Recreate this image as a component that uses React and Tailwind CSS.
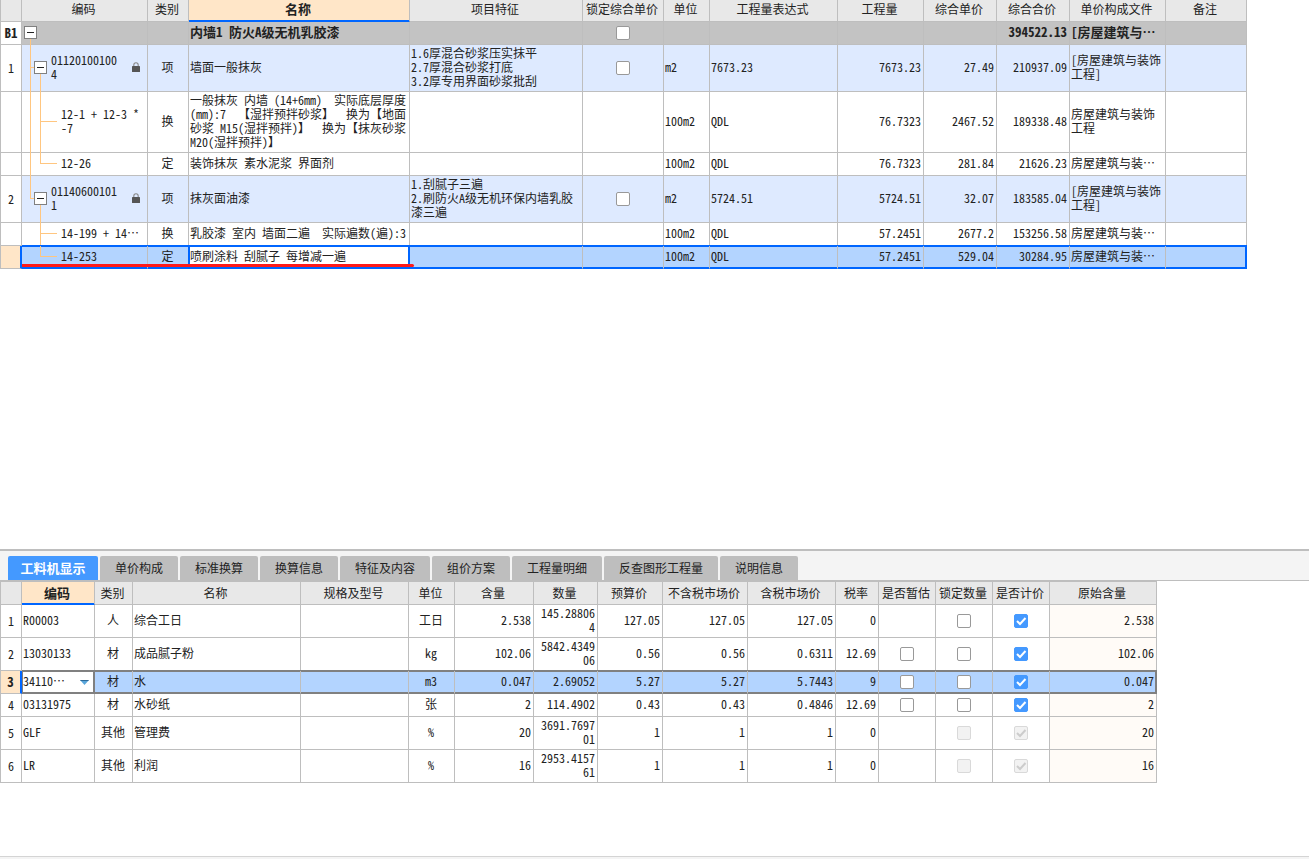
import { useState } from 'react'
import clsx from 'clsx'

const QUOTA_COLS = [
  { key: 'no', label: '', w: 'w-[22px]' },
  { key: 'code', label: '编码', w: 'w-[126px]' },
  { key: 'kind', label: '类别', w: 'w-[41px]' },
  { key: 'name', label: '名称', w: 'w-[221px]', active: true },
  { key: 'feature', label: '项目特征', w: 'w-[173px]' },
  { key: 'lock', label: '锁定综合单价', w: 'w-[81px]' },
  { key: 'unit', label: '单位', w: 'w-[46px]' },
  { key: 'expr', label: '工程量表达式', w: 'w-[128px]' },
  { key: 'qty', label: '工程量', w: 'w-[86px]' },
  { key: 'price', label: '综合单价', w: 'w-[73px]' },
  { key: 'total', label: '综合合价', w: 'w-[73px]' },
  { key: 'file', label: '单价构成文件', w: 'w-[96px]' },
  { key: 'note', label: '备注', w: 'w-[81px]' },
]

// outer / inner: how far the tree guide runs through the row
const QUOTA_ROWS = [
  { level: 0, h: 'h-[23px]', no: 'B1', name: '内墙1 防火A级无机乳胶漆', check: true, total: '394522.13', file: '[房屋建筑与…' },
  {
    level: 1, h: 'h-[47px]', outer: 'full', no: '1', code: '01120100100\n4', kind: '项', name: '墙面一般抹灰',
    feature: '1.6厚混合砂浆压实抹平\n2.7厚混合砂浆打底\n3.2厚专用界面砂浆批刮', check: true,
    unit: 'm2', expr: '7673.23', qty: '7673.23', price: '27.49', total: '210937.09', file: '[房屋建筑与装饰\n工程]',
  },
  {
    level: 2, h: 'h-[61px]', outer: 'full', inner: 'full', code: '12-1 + 12-3 *\n-7', kind: '换',
    name: '一般抹灰 内墙 (14+6mm)  实际底层厚度\n(mm):7  【湿拌预拌砂浆】  换为【地面\n砂浆 M15(湿拌预拌)】  换为【抹灰砂浆\nM20(湿拌预拌)】',
    unit: '100m2', expr: 'QDL', qty: '76.7323', price: '2467.52', total: '189338.48', file: '房屋建筑与装饰\n工程',
  },
  {
    level: 2, h: 'h-[23px]', outer: 'full', inner: 'half', code: '12-26', kind: '定', name: '装饰抹灰 素水泥浆 界面剂',
    unit: '100m2', expr: 'QDL', qty: '76.7323', price: '281.84', total: '21626.23', file: '房屋建筑与装…',
  },
  {
    level: 1, h: 'h-[47px]', outer: 'half', no: '2', code: '01140600101\n1', kind: '项', name: '抹灰面油漆',
    feature: '1.刮腻子三遍\n2.刷防火A级无机环保内墙乳胶\n漆三遍', check: true,
    unit: 'm2', expr: '5724.51', qty: '5724.51', price: '32.07', total: '183585.04', file: '[房屋建筑与装饰\n工程]',
  },
  {
    level: 2, h: 'h-[23px]', inner: 'full', code: '14-199 + 14…', kind: '换', name: '乳胶漆 室内 墙面二遍  实际遍数(遍):3',
    unit: '100m2', expr: 'QDL', qty: '57.2451', price: '2677.2', total: '153256.58', file: '房屋建筑与装…',
  },
  {
    level: 2, h: 'h-[23px]', inner: 'half', selected: true, code: '14-253', kind: '定', name: '喷刷涂料 刮腻子 每增减一遍',
    unit: '100m2', expr: 'QDL', qty: '57.2451', price: '529.04', total: '30284.95', file: '房屋建筑与装…',
  },
]

const TABS = ['工料机显示', '单价构成', '标准换算', '换算信息', '特征及内容', '组价方案', '工程量明细', '反查图形工程量', '说明信息']

const RES_COLS = [
  { key: 'no', label: '', w: 'w-[22px]' },
  { key: 'code', label: '编码', w: 'w-[73px]', active: true },
  { key: 'kind', label: '类别', w: 'w-[38px]' },
  { key: 'name', label: '名称', w: 'w-[168px]' },
  { key: 'spec', label: '规格及型号', w: 'w-[108px]' },
  { key: 'unit', label: '单位', w: 'w-[46px]' },
  { key: 'content', label: '含量', w: 'w-[79px]' },
  { key: 'qty', label: '数量', w: 'w-[64px]' },
  { key: 'budget', label: '预算价', w: 'w-[65px]' },
  { key: 'net', label: '不含税市场价', w: 'w-[85px]' },
  { key: 'gross', label: '含税市场价', w: 'w-[88px]' },
  { key: 'tax', label: '税率', w: 'w-[43px]' },
  { key: 'estimated', label: '是否暂估', w: 'w-[57px]' },
  { key: 'locked', label: '锁定数量', w: 'w-[57px]' },
  { key: 'priced', label: '是否计价', w: 'w-[57px]' },
  { key: 'origin', label: '原始含量', w: 'w-[107px]' },
]

const RES_ROWS = [
  { h: 'h-[33px]', code: 'R00003', kind: '人', name: '综合工日', unit: '工日', content: '2.538', qty: '145.28806\n4', budget: '127.05', net: '127.05', gross: '127.05', tax: '0' },
  { h: 'h-[33px]', code: '13030133', kind: '材', name: '成品腻子粉', unit: 'kg', content: '102.06', qty: '5842.4349\n06', budget: '0.56', net: '0.56', gross: '0.6311', tax: '12.69', estimate: true },
  { h: 'h-[23px]', code: '34110…', kind: '材', name: '水', unit: 'm3', content: '0.047', qty: '2.69052', budget: '5.27', net: '5.27', gross: '5.7443', tax: '9', estimate: true, selected: true },
  { h: 'h-[23px]', code: '03131975', kind: '材', name: '水砂纸', unit: '张', content: '2', qty: '114.4902', budget: '0.43', net: '0.43', gross: '0.4846', tax: '12.69', estimate: true },
  { h: 'h-[33px]', code: 'GLF', kind: '其他', name: '管理费', unit: '%', content: '20', qty: '3691.7697\n01', budget: '1', net: '1', gross: '1', tax: '0', disabled: true },
  { h: 'h-[33px]', code: 'LR', kind: '其他', name: '利润', unit: '%', content: '16', qty: '2953.4157\n61', budget: '1', net: '1', gross: '1', tax: '0', disabled: true },
]

function Check({ label, checked = false, disabled = false }) {
  const [on, setOn] = useState(checked)
  return (
    <span className="relative mx-auto block size-3.5">
      <input
        type="checkbox"
        aria-label={label}
        checked={on}
        disabled={disabled}
        onChange={e => setOn(e.target.checked)}
        className="block size-3.5 appearance-none rounded-xs border border-[#999] bg-white checked:border-[#4499ff] checked:bg-[#4499ff] disabled:border-[#d9d9d9] disabled:bg-[#f2f2f2]"
      />
      {on && (
        <svg viewBox="0 0 14 14" className="pointer-events-none absolute inset-0 size-3.5" fill="none" stroke={disabled ? '#ccc' : '#fff'} strokeWidth="2">
          <path d="M3 7l3 3 5.5-6" />
        </svg>
      )}
    </span>
  )
}

function HeadRow({ cols, className, cellClass }) {
  return (
    <thead>
      <tr className={className}>
        {cols.map(c => (
          <th
            key={c.key}
            scope="col"
            className={clsx(
              'border-r border-b border-[#bebebe] pt-0 pr-0.5 pl-0 first:border-l',
              cellClass,
              c.active
                ? 'border-b-[#0066ff] bg-[#ffe6c8] text-[13px] font-bold shadow-[inset_0_-1px_0_#0066ff]'
                : 'bg-[#e8e8e8] font-normal'
            )}
          >
            {c.label}
          </th>
        ))}
      </tr>
    </thead>
  )
}

function Toggle({ className }) {
  return (
    <button type="button" aria-label="折叠" className={clsx('absolute top-1/2 -mt-[7px] flex size-[13px] items-center justify-center border border-[#808080] bg-white', className)}>
      <span className="h-px w-[7px] bg-[#222]" />
    </button>
  )
}

function LockIcon() {
  return (
    <svg viewBox="0 0 8 10" className="mr-[7px] h-2.5 w-2 shrink-0" aria-hidden="true">
      <path d="M1.8 4.5V3a2.2 2.2 0 0 1 4.4 0v1.5" fill="none" stroke="#888" strokeWidth="1.1" />
      <rect x="0" y="4" width="8" height="6" rx="0.6" fill="#555" />
    </svg>
  )
}

function TreeCell({ row }) {
  return (
    <>
      {row.level === 0 && <span className="absolute top-1/2 -bottom-px left-2 w-px bg-[#ffc680]" />}
      {row.outer && <span className={clsx('absolute top-0 left-2 w-px bg-[#ffc680]', row.outer === 'full' ? '-bottom-px' : 'bottom-1/2')} />}
      {row.level === 1 && (
        <>
          <span className="absolute top-1/2 left-2 -mt-px h-px w-1.5 bg-[#ffc680]" />
          <span className="absolute top-1/2 -bottom-px left-[18px] w-px bg-[#ffc680]" />
        </>
      )}
      {row.inner && (
        <>
          <span className={clsx('absolute top-0 left-[18px] w-px bg-[#ffc680]', row.inner === 'full' ? '-bottom-px' : 'bottom-1/2')} />
          <span className="absolute top-1/2 left-[18px] -mt-px h-px w-[17px] bg-[#ffc680]" />
        </>
      )}
      {row.level === 0 && <Toggle className="left-0.5" />}
      {row.level === 1 && <Toggle className="left-3" />}
      <span className={clsx('flex items-center justify-between', row.level === 2 ? 'pl-[39px]' : 'pl-[29px]')}>
        <span>{row.code}</span>
        {row.level === 1 && <LockIcon />}
      </span>
    </>
  )
}

function QuotaTable() {
  const [name, setName] = useState(QUOTA_ROWS[6].name)

  return (
    <div className="relative">
      <table className="w-[1247px] table-fixed border-separate border-spacing-0">
        <colgroup>{QUOTA_COLS.map(c => <col key={c.key} className={c.w} />)}</colgroup>
        <HeadRow cols={QUOTA_COLS} className="h-[22px]" cellClass="pb-1" />
        <tbody>
          {QUOTA_ROWS.map((r, i) => {
            const box = clsx(
              'border-r border-b border-[#bebebe] whitespace-pre',
              r.level === 0 && 'bg-[#c3c3c3]',
              r.level === 1 && 'bg-[#deeaff]',
              r.selected && 'border-b-[#0066ff] bg-[#b3d4ff] shadow-[inset_0_1px_0_#0066ff,inset_0_-1px_0_#0066ff,0_-1px_0_#0066ff]'
            )
            const cell = clsx(box, 'pb-0.5')
            return (
              <tr key={i} className={clsx(r.h, r.level === 0 && 'text-[13px] font-bold')}>
                <td className={clsx('border-x border-b border-[#bebebe] text-center', r.selected && 'border-r-2 border-r-[#0066ff] bg-[#ffe6c8]')}>{r.no}</td>
                <td className={clsx(cell, 'relative')}><TreeCell row={r} /></td>
                <td className={clsx(cell, 'pr-px text-center', r.selected && 'border-r-[#0066ff]')}>{r.kind}</td>
                {r.selected ? (
                  <td className="border-r-2 border-b border-[#0066ff] bg-white pb-0.5 shadow-[inset_1px_1px_0_#0066ff,inset_0_-1px_0_#0066ff,0_-1px_0_#0066ff]">
                    <input
                      type="text"
                      aria-label="名称"
                      value={name}
                      onChange={e => setName(e.target.value)}
                      className="block h-3.5 w-full bg-transparent pl-px outline-none"
                    />
                  </td>
                ) : (
                  <td className={clsx(cell, 'pl-px')}>{r.name}</td>
                )}
                <td className={clsx(cell, 'pl-px')}>{r.feature}</td>
                <td className={box}>{r.check && <Check label={`锁定综合单价 ${r.no}`} />}</td>
                <td className={clsx(cell, 'pl-px')}>{r.unit}</td>
                <td className={clsx(cell, 'pl-px')}>{r.expr}</td>
                <td className={clsx(cell, 'pr-0.5 text-right')}>{r.qty}</td>
                <td className={clsx(cell, 'pr-0.5 text-right')}>{r.price}</td>
                <td className={clsx(cell, 'pr-0.5 text-right')}>{r.total}</td>
                <td className={clsx(cell, 'pl-px')}>{r.file}</td>
                <td className={clsx(cell, r.selected && 'border-r-2 border-r-[#0066ff]')} />
              </tr>
            )
          })}
        </tbody>
      </table>
      {/* red marker under the selected quota */}
      <span className="absolute bottom-0.5 left-[22px] h-[3px] w-[392px] rounded-r-full bg-[#ff1a1a]" />
    </div>
  )
}

function ResourceTable() {
  return (
    <table className="w-[1157px] table-fixed border-separate border-spacing-0 border-t border-[#bebebe]">
      <colgroup>{RES_COLS.map(c => <col key={c.key} className={c.w} />)}</colgroup>
      <HeadRow cols={RES_COLS} className="h-[23px]" cellClass="pb-0" />
      <tbody>
        {RES_ROWS.map((r, i) => {
          const box = clsx(
            'border-r border-b border-[#bebebe] whitespace-pre',
            r.selected && 'border-b-[#808080] bg-[#b3d4ff] shadow-[inset_0_1px_0_#808080,inset_0_-1px_0_#808080,0_-1px_0_#808080]'
          )
          const cell = clsx(box, 'pb-0.5')
          return (
            <tr key={r.code} className={r.h}>
              <td className={clsx('border-x border-b border-[#bebebe] text-center', r.selected && 'border-r-2 border-r-[#0066ff] bg-[#ffe6c8] text-[13px] font-bold')}>{i + 1}</td>
              {r.selected ? (
                <td className="relative border-r-2 border-b border-[#808080] bg-white pb-0.5 shadow-[inset_1px_1px_0_#808080,inset_0_-1px_0_#808080,0_-1px_0_#808080]">
                  <select aria-label="编码" className="block h-3.5 w-full appearance-none bg-transparent pl-px outline-none">
                    <option>{r.code}</option>
                  </select>
                  <svg viewBox="0 0 9 5" className="pointer-events-none absolute top-[9px] right-1 h-[5px] w-[9px]" aria-hidden="true">
                    <path d="M0 0h9L4.5 5z" fill="#5aa7dc" />
                    <path d="M0 0h9L8 1H1z" fill="#2d6a99" />
                  </svg>
                </td>
              ) : (
                <td className={clsx(cell, 'pl-px')}>{r.code}</td>
              )}
              <td className={clsx(cell, 'pr-px text-center')}>{r.kind}</td>
              <td className={clsx(cell, 'pl-px')}>{r.name}</td>
              <td className={cell} />
              <td className={clsx(cell, 'pr-px text-center')}>{r.unit}</td>
              <td className={clsx(cell, 'pr-0.5 text-right')}>{r.content}</td>
              <td className={clsx(cell, 'pr-0.5 text-right')}>{r.qty}</td>
              <td className={clsx(cell, 'pr-0.5 text-right')}>{r.budget}</td>
              <td className={clsx(cell, 'pr-0.5 text-right')}>{r.net}</td>
              <td className={clsx(cell, 'pr-0.5 text-right')}>{r.gross}</td>
              <td className={clsx(cell, 'pr-0.5 text-right')}>{r.tax}</td>
              <td className={box}>{r.estimate && <Check label={`是否暂估 ${r.name}`} />}</td>
              <td className={box}><Check label={`锁定数量 ${r.name}`} disabled={r.disabled} /></td>
              <td className={box}><Check label={`是否计价 ${r.name}`} checked disabled={r.disabled} /></td>
              <td className={clsx(cell, 'text-right', r.selected ? 'border-r-2 border-r-[#808080] pr-px' : 'bg-[#fffbf7] pr-0.5')}>{r.content}</td>
            </tr>
          )
        })}
      </tbody>
    </table>
  )
}

export default function App() {
  const [tab, setTab] = useState(TABS[0])

  return (
    <div lang="zh-CN" className="flex min-h-screen flex-col bg-white font-['Noto_Sans_Mono_CJK_SC','Noto_Sans_CJK_SC',monospace] text-[12px] leading-[14px] text-[#222]">
      <main className="flex-1 overflow-x-auto">
        <QuotaTable />
      </main>

      <section className="border-t-2 border-[#bebebe]">
        <div role="tablist" className="flex gap-0.5 border-b border-[#bebebe] bg-[#f4f4f4] pt-[5px] pl-2">
          {TABS.map(t => (
            <button
              key={t}
              type="button"
              role="tab"
              aria-selected={tab === t}
              onClick={() => setTab(t)}
              className={clsx(
                'h-6 rounded-t-xs whitespace-nowrap',
                tab === t ? 'min-w-[90px] bg-[#4499ff] px-3 text-[13px] font-bold text-white' : 'bg-[#bebebe] px-[15px]'
              )}
            >
              {t}
            </button>
          ))}
        </div>
        <div className="overflow-x-auto pb-[73px]">
          <ResourceTable />
        </div>
        <footer className="h-[3px] border-t border-[#d4d4d4] bg-[#f4f4f4]" />
      </section>
    </div>
  )
}
